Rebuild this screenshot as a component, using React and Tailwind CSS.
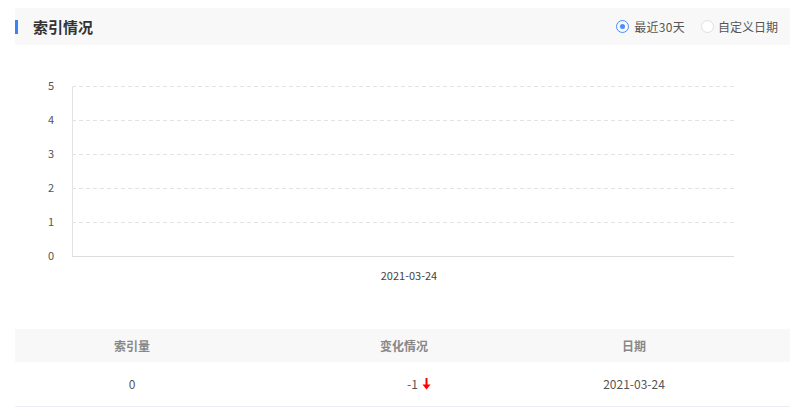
export default function App() {
  const font = { fontFamily: '"Noto Sans CJK SC", "Noto Sans", sans-serif' }
  const grid = [41, 75, 109, 143, 177]
  const labels = ['5', '4', '3', '2', '1', '0']

  return (
    <main className="min-h-screen bg-white px-[15px] pt-[8px] text-[#333]" style={font}>
      {/* header */}
      <div className="w-[775px] h-[37px] bg-[#f8f8f8] flex items-center">
        <div className="w-[3px] h-[14px] bg-[#3b82f6]" />
        <h1 className="ml-[15px] text-[15px] font-bold text-[#333] leading-none">索引情况</h1>
        <div className="ml-auto mr-[12px] flex items-center text-[12px] text-[#555]">
          <label className="flex items-center">
            <span className="w-[13px] h-[13px] rounded-full border border-[#4a8cff] flex items-center justify-center">
              <span className="w-[5px] h-[5px] rounded-full bg-[#4a8cff]" />
            </span>
            <span className="ml-[5px] tracking-[0.3px]">最近30天</span>
          </label>
          <label className="flex items-center ml-[16px]">
            <span className="w-[13px] h-[13px] rounded-full border border-[#dcdfe6] bg-white" />
            <span className="ml-[4px]">自定义日期</span>
          </label>
        </div>
      </div>

      {/* chart */}
      <svg width="775" height="284" className="block">
        {grid.map((y) => (
          <line key={y} x1="57" x2="719" y1={y + 0.5} y2={y + 0.5} stroke="#e3e3e3" strokeDasharray="4 3" />
        ))}
        <line x1="57.5" x2="57.5" y1="41" y2="211" stroke="#e3e3e3" />
        <line x1="57" x2="719" y1="211.5" y2="211.5" stroke="#dcdcdc" />
        {labels.map((l, i) => (
          <text key={l} x="39" y={41 + i * 34 + 4} textAnchor="end" fontSize="11" fill="#555">
            {l}
          </text>
        ))}
        <text x="394" y="235" textAnchor="middle" fontSize="11" fill="#444">2021-03-24</text>
      </svg>

      {/* table */}
      <div className="w-[775px] text-[12px]">
        <div className="grid grid-cols-[234px_310px_150px_1fr] h-[33px] items-center bg-[#f8f8f8] text-[#888] font-bold">
          <div className="text-center">索引量</div>
          <div className="text-center">变化情况</div>
          <div className="text-center">日期</div>
          <div />
        </div>
        <div className="grid grid-cols-[234px_310px_150px_1fr] h-[45px] items-center border-b border-[#ebeef5] text-[#555]">
          <div className="text-center">0</div>
          <div className="flex items-center justify-center pl-[30px]">
            <span>-1</span>
            <svg width="9" height="12" viewBox="0 0 9 12" className="ml-[4px]">
              <line x1="4.5" y1="0" x2="4.5" y2="10" stroke="#f00" strokeWidth="2" />
              <path d="M0.5 6.5 L4.5 11.5 L8.5 6.5 Z" fill="#f00" />
            </svg>
          </div>
          <div className="text-center">2021-03-24</div>
          <div />
        </div>
      </div>
    </main>
  )
}
